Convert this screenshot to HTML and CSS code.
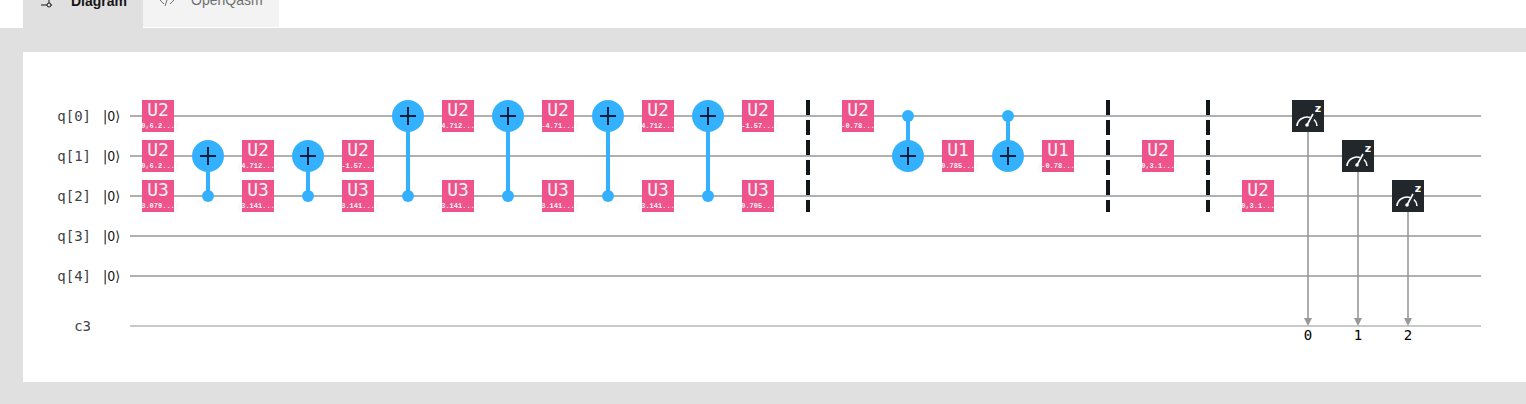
FILE: index.html
```
<!DOCTYPE html>
<html lang="en">
<head>
<meta charset="utf-8">
<title>Circuit diagram</title>
<link rel="stylesheet" href="styles.css">
</head>
<body>
<header class="tabs" role="tablist">
  <button class="tab tab-active" role="tab" aria-selected="true" aria-controls="diagram">
    <svg class="tab-icon" width="16" height="16" viewBox="0 0 16 16" aria-hidden="true"><path d="M2 4H13M2 12H8M12 12H13M10 4V10"/><circle cx="10" cy="12" r="2"/></svg>
    <span>Diagram</span>
  </button>
  <button class="tab" role="tab" aria-selected="false">
    <svg class="tab-icon" width="16" height="16" viewBox="0 0 16 16" aria-hidden="true"><path d="M5 4L1 8L5 12M11 4L15 8L11 12M10 2L6 14"/></svg>
    <span>OpenQasm</span>
  </button>
</header>
<main class="panel" id="diagram" role="tabpanel">
  <ul class="registers">
    <li class="register"><span class="name">q[0]</span><span class="ket">|0⟩</span></li>
    <li class="register"><span class="name">q[1]</span><span class="ket">|0⟩</span></li>
    <li class="register"><span class="name">q[2]</span><span class="ket">|0⟩</span></li>
    <li class="register"><span class="name">q[3]</span><span class="ket">|0⟩</span></li>
    <li class="register"><span class="name">q[4]</span><span class="ket">|0⟩</span></li>
    <li class="register classical"><span class="name">c3</span></li>
  </ul>
  <svg class="circuit" width="1351" height="260" viewBox="0 0 1351 260">
    <defs>
      <g id="plus"><circle r="16" fill="#33b1ff"/><path d="M-8 0H8M0 -9V9" stroke="#061f3d" stroke-width="2"/></g>
      <g id="meter">
        <rect x="-16" y="-16" width="32" height="32" fill="#21272a"/>
        <path d="M-11 10A10 9.500 0 0 1 2 1.500M6 3.500A10 9.500 0 0 1 9 10" fill="none" stroke="#fff" stroke-width="1.600"/>
        <path d="M-1 9L5 -2" stroke="#fff" stroke-width="1.600"/>
        <circle cx="-1" cy="9" r="1.800" fill="#fff"/>
      </g>
    </defs>
    <path class="barrier" d="M678 8V120M978 8V120M1078 8V120"/>
    <path class="wire" d="M0 24H1351M0 64H1351M0 104H1351M0 144H1351M0 184H1351"/>
    <path class="wire wire-classical" d="M0 234H1351"/>
    <path class="measure-line" d="M1178 24V228M1228 64V228M1278 104V228"/>
    <path class="arrow" d="M1174 226h8l-4 8zM1224 226h8l-4 8zM1274 226h8l-4 8z"/>
    <path class="link" d="M78 64V104M178 64V104M278 24V104M378 24V104M478 24V104M578 24V104M778 24V64M878 24V64"/>
    <g class="control">
      <circle cx="78" cy="104" r="6"/><circle cx="178" cy="104" r="6"/><circle cx="278" cy="104" r="6"/><circle cx="378" cy="104" r="6"/>
      <circle cx="478" cy="104" r="6"/><circle cx="578" cy="104" r="6"/><circle cx="778" cy="24" r="6"/><circle cx="878" cy="24" r="6"/>
    </g>
    <use href="#plus" x="78" y="64"/><use href="#plus" x="178" y="64"/>
    <use href="#plus" x="278" y="24"/><use href="#plus" x="378" y="24"/><use href="#plus" x="478" y="24"/><use href="#plus" x="578" y="24"/>
    <use href="#plus" x="778" y="64"/><use href="#plus" x="878" y="64"/>

    <g class="gate" transform="translate(28 24)"><rect x="-16" y="-16" width="32" height="32"/><text>U2</text><text class="param" y="12">(0,6.2...)</text></g>
    <g class="gate" transform="translate(328 24)"><rect x="-16" y="-16" width="32" height="32"/><text>U2</text><text class="param" y="12">(4.712...)</text></g>
    <g class="gate" transform="translate(428 24)"><rect x="-16" y="-16" width="32" height="32"/><text>U2</text><text class="param" y="12">(-4.71...)</text></g>
    <g class="gate" transform="translate(528 24)"><rect x="-16" y="-16" width="32" height="32"/><text>U2</text><text class="param" y="12">(4.712...)</text></g>
    <g class="gate" transform="translate(628 24)"><rect x="-16" y="-16" width="32" height="32"/><text>U2</text><text class="param" y="12">(-1.57...)</text></g>
    <g class="gate" transform="translate(728 24)"><rect x="-16" y="-16" width="32" height="32"/><text>U2</text><text class="param" y="12">(-0.78...)</text></g>

    <g class="gate" transform="translate(28 64)"><rect x="-16" y="-16" width="32" height="32"/><text>U2</text><text class="param" y="12">(0,6.2...)</text></g>
    <g class="gate" transform="translate(128 64)"><rect x="-16" y="-16" width="32" height="32"/><text>U2</text><text class="param" y="12">(4.712...)</text></g>
    <g class="gate" transform="translate(228 64)"><rect x="-16" y="-16" width="32" height="32"/><text>U2</text><text class="param" y="12">(-1.57...)</text></g>
    <g class="gate" transform="translate(828 64)"><rect x="-16" y="-16" width="32" height="32"/><text>U1</text><text class="param" y="12">(0.785...)</text></g>
    <g class="gate" transform="translate(928 64)"><rect x="-16" y="-16" width="32" height="32"/><text>U1</text><text class="param" y="12">(-0.78...)</text></g>
    <g class="gate" transform="translate(1028 64)"><rect x="-16" y="-16" width="32" height="32"/><text>U2</text><text class="param" y="12">(0,3.1...)</text></g>

    <g class="gate" transform="translate(28 104)"><rect x="-16" y="-16" width="32" height="32"/><text>U3</text><text class="param" y="12">(3.079...)</text></g>
    <g class="gate" transform="translate(128 104)"><rect x="-16" y="-16" width="32" height="32"/><text>U3</text><text class="param" y="12">(3.141...)</text></g>
    <g class="gate" transform="translate(228 104)"><rect x="-16" y="-16" width="32" height="32"/><text>U3</text><text class="param" y="12">(3.141...)</text></g>
    <g class="gate" transform="translate(328 104)"><rect x="-16" y="-16" width="32" height="32"/><text>U3</text><text class="param" y="12">(3.141...)</text></g>
    <g class="gate" transform="translate(428 104)"><rect x="-16" y="-16" width="32" height="32"/><text>U3</text><text class="param" y="12">(3.141...)</text></g>
    <g class="gate" transform="translate(528 104)"><rect x="-16" y="-16" width="32" height="32"/><text>U3</text><text class="param" y="12">(3.141...)</text></g>
    <g class="gate" transform="translate(628 104)"><rect x="-16" y="-16" width="32" height="32"/><text>U3</text><text class="param" y="12">(0.705...)</text></g>
    <g class="gate" transform="translate(1128 104)"><rect x="-16" y="-16" width="32" height="32"/><text>U2</text><text class="param" y="12">(0,3.1...)</text></g>

    <use href="#meter" x="1178" y="24"/><use href="#meter" x="1228" y="64"/><use href="#meter" x="1278" y="104"/>
    <g class="basis"><text x="1188" y="20">z</text><text x="1238" y="60">z</text><text x="1288" y="100">z</text></g>
    <g class="bit"><text x="1178" y="248">0</text><text x="1228" y="248">1</text><text x="1278" y="248">2</text></g>
  </svg>
</main>
</body>
</html>
```
FILE: styles.css
```
* { box-sizing: border-box; }
body {
  margin: 0;
  min-height: 100vh;
  background: #e0e0e0;
  font-family: "Liberation Sans", Arial, sans-serif;
  overflow-x: hidden;
}
.tabs {
  display: flex;
  align-items: flex-end;
  height: 28px;
  padding-left: 23px;
  background: #fff;
  overflow: hidden;
}
.tab {
  display: flex;
  flex: none;
  align-items: center;
  gap: 16px;
  height: 54px;
  margin-bottom: 1px;
  padding: 0 16px;
  border: 0;
  background: #f3f3f3;
  color: #6f6f6f;
  font: 400 14px/20px "Liberation Sans", Arial, sans-serif;
}
.tab-active {
  height: 55px;
  margin-bottom: 0;
  background: #e0e0e0;
  color: #161616;
  font-weight: 700;
}
.tab-icon { fill: none; stroke: currentColor; stroke-width: 1; }
.panel {
  display: flex;
  margin: 24px 0 22px 23px;
  padding: 40px 0 30px;
  background: #fff;
  overflow: hidden;
}
.registers {
  flex: none;
  width: 107px;
  margin: 0;
  padding: 4px 0;
  list-style: none;
}
.register {
  display: flex;
  align-items: center;
  gap: 12px;
  height: 40px;
}
.classical { margin-top: 10px; }
.name {
  width: 68px;
  color: #3d4246;
  font: 14px/20px "DejaVu Sans Mono", monospace;
  text-align: right;
}
.ket {
  color: #121619;
  font: 14px/20px "DejaVu Sans Condensed", "DejaVu Sans", sans-serif;
}
.circuit { display: block; flex: none; overflow: visible; }
.wire { stroke: #b0b0b0; stroke-width: 2; }
.wire-classical { stroke: #c9c9c9; }
.barrier { stroke: #121619; stroke-width: 4; stroke-dasharray: 15 5; }
.measure-line { stroke: #999; stroke-opacity: 0.8; stroke-width: 2; }
.arrow { fill: #999; }
.link { stroke: #33b1ff; stroke-width: 4; }
.control { fill: #33b1ff; }
.gate rect { fill: #ee538b; }
.gate text {
  fill: #f4f4f4;
  font: 18px "DejaVu Sans Mono", monospace;
  text-anchor: middle;
}
.gate .param { font: bold 7px "Liberation Mono", monospace; }
.basis text {
  fill: #fff;
  font: bold 11px "DejaVu Sans", sans-serif;
  text-anchor: middle;
}
.bit text {
  fill: #000;
  font: 14px "DejaVu Sans Mono", monospace;
  text-anchor: middle;
}
```
